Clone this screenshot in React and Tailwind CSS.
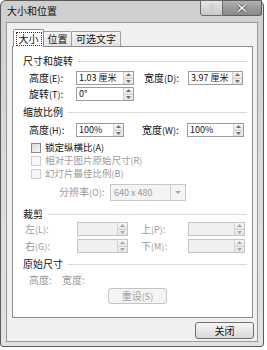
import React from "react";

const FONT = "font-['Noto_Sans_CJK_SC','Noto_Sans',sans-serif]";

function Acc({ children }) {
  return <span className="text-[9px]">({children})</span>;
}

function SpinBtns({ disabled }) {
  const arrow = disabled ? "#a8a8a8" : "#707070";
  return (
    <div className={`w-[10px] h-full flex flex-col border-l ${disabled ? "border-[#d4d4d4]" : "border-[#d0d0d0]"}`}>
      <div className="flex-1 flex items-center justify-center bg-gradient-to-b from-[#f8f8f8] to-[#e6e6e6] border-b border-[#d0d0d0]">
        <svg width="5" height="3" viewBox="0 0 5 3"><path d="M0 3 L2.5 0 L5 3 Z" fill={arrow} /></svg>
      </div>
      <div className="flex-1 flex items-center justify-center bg-gradient-to-b from-[#f2f2f2] to-[#e2e2e2]">
        <svg width="5" height="3" viewBox="0 0 5 3"><path d="M0 0 L2.5 3 L5 0 Z" fill={arrow} /></svg>
      </div>
    </div>
  );
}

function Spin({ className, value, disabled }) {
  return (
    <div
      className={`flex h-[14px] border ${
        disabled ? "border-[#c4c4c4] bg-[#f0f0f0]" : "border-[#9c9c9c] bg-white"
      } ${className}`}
    >
      <div className="flex-1 pl-[2px] text-[9px] leading-[12px] text-[#111] whitespace-nowrap overflow-hidden">
        {value}
      </div>
      <SpinBtns disabled={disabled} />
    </div>
  );
}

function Heading({ children, className = "" }) {
  return (
    <div className={`flex items-center h-[14px] pl-[10px] pr-[5px] ${className}`}>
      <span className="text-[10px] leading-[14px] text-[#111] mr-[5px]">{children}</span>
      <div className="flex-1 h-px bg-[#dadada]" />
    </div>
  );
}

function Check({ label, disabled, className = "" }) {
  return (
    <div className={`flex items-center h-[13px] pl-[18px] ${className}`}>
      <div
        className={`w-[10px] h-[10px] border ${
          disabled
            ? "border-[#cfcfcf] bg-[#f6f6f6]"
            : "border-[#8a8a8a] bg-gradient-to-br from-[#d8d8d8] to-[#f7f7f7]"
        }`}
      />
      <span className={`ml-[4px] text-[9.5px] leading-[12px] whitespace-nowrap ${disabled ? "text-[#9a9a9a]" : "text-[#111]"}`}>
        {label}
      </span>
    </div>
  );
}

export default function App() {
  return (
    <div className={`w-[267px] h-[350px] bg-white ${FONT}`}>
      <div className="w-[264px] h-[347px] border border-[#5a5a5a] rounded-t-[6px] rounded-b-[3px] bg-gradient-to-b from-[#cfcfcf] via-[#dcdcdc] to-[#e2e2e2] flex flex-col">
        {/* Title bar */}
        <div className="h-[21px] flex items-start justify-between">
          <div className="pl-[6px] pt-[4px] text-[10px] leading-[12px] text-[#111]">大小和位置</div>
          <div className="flex -mt-px mr-[1px]">
            <div className="w-[23px] h-[16px] border border-[#6a6a6a] rounded-bl-[3px] bg-gradient-to-b from-[#e6e6e6] to-[#c9c9c9] flex items-center justify-center text-[10px] leading-none text-[#f4f4f4] [text-shadow:0_0_1px_#555]">
              ?
            </div>
            <div className="w-[39px] h-[16px] border border-l-0 border-[#5e5e5e] rounded-br-[3px] bg-gradient-to-b from-[#b2b2b2] via-[#9a9a9a] to-[#8a8a8a] flex items-center justify-center">
              <svg width="10" height="8" viewBox="0 0 10 8">
                <path d="M1 0.5 L9 7.5 M9 0.5 L1 7.5" stroke="#555" strokeWidth="3" />
                <path d="M1 0.5 L9 7.5 M9 0.5 L1 7.5" stroke="#f2f2f2" strokeWidth="1.6" />
              </svg>
            </div>
          </div>
        </div>

        {/* Client */}
        <div className="mx-[5px] mb-[4px] flex-1 border border-[#9a9a9a] bg-[#f0f0f0] flex flex-col">
          {/* tabs */}
          <div className="mt-[6px] ml-[5px] h-[17px] flex items-end">
            <div className="relative z-10 ml-[1px] -mb-px w-[31px] h-[18px] bg-white border border-b-0 border-[#8e8e8e] rounded-t-[2px] flex items-center justify-center">
              <div className="border border-dotted border-[#333] px-[2px] h-[14px] flex items-center text-[10px] leading-none text-[#111]">
                大小
              </div>
            </div>
            <div className="w-[28px] h-[15px] border border-l-0 border-b-0 border-[#9e9e9e] rounded-tr-[2px] bg-gradient-to-b from-[#f4f4f4] to-[#e4e4e4] flex items-center justify-center text-[10px] leading-none text-[#111]">
              位置
            </div>
            <div className="w-[49px] h-[15px] border border-l-0 border-b-0 border-[#9e9e9e] rounded-tr-[2px] bg-gradient-to-b from-[#f4f4f4] to-[#e4e4e4] flex items-center justify-center text-[10px] leading-none text-[#111]">
              可选文字
            </div>
          </div>

          {/* panel */}
          <div className="ml-[5px] w-[241px] h-[272px] bg-white border border-[#8e8e8e] flex flex-col">
            <Heading className="mt-[7px]">尺寸和旋转</Heading>

            <div className="mt-[3px] h-[14px] flex items-center pl-[16px]">
              <span className="w-[47px] text-[10px] leading-[14px] text-[#111] whitespace-nowrap">高度<Acc>E</Acc>:</span>
              <Spin className="w-[58px]" value="1.03 厘米" />
              <span className="ml-[10px] w-[44px] text-[10px] leading-[14px] text-[#111] whitespace-nowrap">宽度<Acc>D</Acc>:</span>
              <Spin className="w-[55px]" value="3.97 厘米" />
            </div>

            <div className="mt-[2px] h-[14px] flex items-center pl-[16px]">
              <span className="w-[47px] text-[10px] leading-[14px] text-[#111] whitespace-nowrap">旋转<Acc>T</Acc>:</span>
              <Spin className="w-[58px]" value="0°" />
            </div>

            <Heading className="mt-[4px]">缩放比例</Heading>

            <div className="mt-[4px] h-[14px] flex items-center pl-[16px]">
              <span className="w-[47px] text-[10px] leading-[14px] text-[#111] whitespace-nowrap">高度<Acc>H</Acc>:</span>
              <Spin className="w-[48px]" value="100%" />
              <span className="ml-[18px] w-[45px] text-[10px] leading-[14px] text-[#111] whitespace-nowrap">宽度<Acc>W</Acc>:</span>
              <Spin className="w-[57px]" value="100%" />
            </div>

            <Check className="mt-[4px]" label={<>锁定纵横比<Acc>A</Acc></>} />
            <Check label={<>相对于图片原始尺寸<Acc>R</Acc></>} disabled />
            <Check label={<>幻灯片最佳比例<Acc>B</Acc></>} disabled />

            <div className="mt-[4px] h-[17px] flex items-center pl-[46px]">
              <span className="w-[51px] text-[10px] leading-[14px] text-[#9a9a9a] whitespace-nowrap">分辨率<Acc>O</Acc>:</span>
              <div className="w-[76px] h-[17px] border border-[#c8c8c8] bg-[#f4f4f4] flex">
                <div className="flex-1 pl-[3px] text-[9px] leading-[15px] text-[#9a9a9a]">640 x 480</div>
                <div className="w-[15px] border-l border-[#d2d2d2] flex items-center justify-center">
                  <svg width="6" height="3" viewBox="0 0 6 3"><path d="M0 0 L3 3 L6 0 Z" fill="#a8a8a8" /></svg>
                </div>
              </div>
            </div>

            <Heading className="mt-[6px]">裁剪</Heading>

            <div className="mt-[1px] h-[14px] flex items-center pl-[12px]">
              <span className="w-[52px] text-[10px] leading-[14px] text-[#9a9a9a] whitespace-nowrap">左<Acc>L</Acc>:</span>
              <Spin className="w-[51px]" value="" disabled />
              <span className="ml-[13px] w-[47px] text-[10px] leading-[14px] text-[#9a9a9a] whitespace-nowrap">上<Acc>P</Acc>:</span>
              <Spin className="w-[57px]" value="" disabled />
            </div>

            <div className="mt-[3px] h-[14px] flex items-center pl-[12px]">
              <span className="w-[52px] text-[10px] leading-[14px] text-[#9a9a9a] whitespace-nowrap">右<Acc>G</Acc>:</span>
              <Spin className="w-[51px]" value="" disabled />
              <span className="ml-[13px] w-[47px] text-[10px] leading-[14px] text-[#9a9a9a] whitespace-nowrap">下<Acc>M</Acc>:</span>
              <Spin className="w-[57px]" value="" disabled />
            </div>

            <Heading className="mt-[4px]">原始尺寸</Heading>

            <div className="mt-[2px] h-[14px] flex items-center pl-[16px] text-[10px] leading-[14px] text-[#9a9a9a]">
              <span className="w-[33px]">高度:</span>
              <span>宽度:</span>
            </div>

            <div className="mt-[1px] ml-[95px] w-[59px] h-[16px] rounded-[3px] border border-[#c4c4c4] bg-[#f4f4f4] flex items-center justify-center text-[10px] leading-none text-[#a0a0a0]">
              重设<Acc>S</Acc>
            </div>
          </div>

          <div className="mt-[4px] mr-[3px] self-end w-[59px] h-[17px] rounded-[3px] border border-[#707070] bg-gradient-to-b from-[#f6f6f6] via-[#e8e8e8] to-[#d8d8d8] flex items-center justify-center text-[10px] leading-none text-[#111]">
            关闭
          </div>
        </div>
      </div>
    </div>
  );
}
